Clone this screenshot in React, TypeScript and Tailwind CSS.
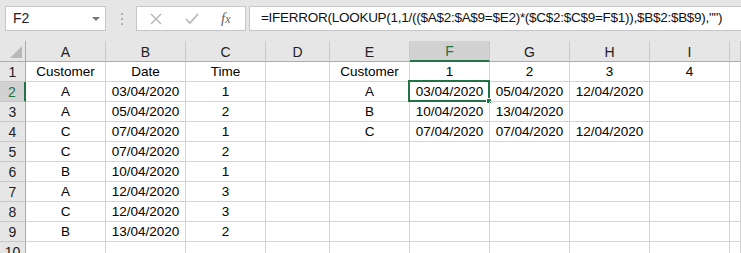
import { Fragment } from 'react'

const COLS = ['A', 'B', 'C', 'D', 'E', 'F', 'G', 'H', 'I', '']

const ROWS: string[][] = [
    ['Customer', 'Date', 'Time', '', 'Customer', '1', '2', '3', '4', ''],
    ['A', '03/04/2020', '1', '', 'A', '03/04/2020', '05/04/2020', '12/04/2020', '', ''],
    ['A', '05/04/2020', '2', '', 'B', '10/04/2020', '13/04/2020', '', '', ''],
    ['C', '07/04/2020', '1', '', 'C', '07/04/2020', '07/04/2020', '12/04/2020', '', ''],
    ['C', '07/04/2020', '2', '', '', '', '', '', '', ''],
    ['B', '10/04/2020', '1', '', '', '', '', '', '', ''],
    ['A', '12/04/2020', '3', '', '', '', '', '', '', ''],
    ['C', '12/04/2020', '3', '', '', '', '', '', '', ''],
    ['B', '13/04/2020', '2', '', '', '', '', '', '', ''],
    ['', '', '', '', '', '', '', '', '', ''],
]

const FORMULA = '=IFERROR(LOOKUP(1,1/(($A$2:$A$9=$E2)*($C$2:$C$9=F$1)),$B$2:$B$9),"")'

function FormulaBar() {
    return (
        <div className="flex h-[41px] items-start bg-[#e6e6e6] pl-[5px] pt-[6px]">
            <div className="flex h-[25px] w-[101px] items-center justify-between border border-[#c6c6c6] bg-white pl-[7px] pr-[5px]">
                <span className="text-[14px] text-[#222]">F2</span>
                <span className="h-0 w-0 border-x-[4px] border-t-[4px] border-x-transparent border-t-[#777]" />
            </div>
            <div className="ml-[15px] flex h-[25px] flex-col items-center justify-center gap-[3px]">
                <span className="h-[2px] w-[2px] bg-[#b0b0b0]" />
                <span className="h-[2px] w-[2px] bg-[#b0b0b0]" />
                <span className="h-[2px] w-[2px] bg-[#b0b0b0]" />
            </div>
            <div className="ml-[13px] flex h-[25px] w-[110px] items-center border border-[#c6c6c6] bg-white">
                <svg width="12" height="12" viewBox="0 0 12 12" className="ml-[13px]">
                    <path d="M1 1 L11 11 M11 1 L1 11" stroke="#b4b4b4" strokeWidth="1.3" fill="none" />
                </svg>
                <svg width="14" height="12" viewBox="0 0 14 12" className="ml-[23px]">
                    <path d="M1 6 L5 10 L13 1" stroke="#b4b4b4" strokeWidth="1.6" fill="none" />
                </svg>
                <span className="ml-[22px] font-['Liberation_Serif',serif] text-[15px] italic leading-none text-[#666]">
                    f<span className="text-[12px]">x</span>
                </span>
            </div>
            <div className="ml-[3px] flex h-[25px] flex-1 items-center border border-[#c6c6c6] border-r-0 bg-white pl-[11px]">
                <span className="whitespace-nowrap text-[13.5px] tracking-[-0.27px] text-[#111]">{FORMULA}</span>
            </div>
        </div>
    )
}

export default function App() {
    return (
        <div className="h-[253px] w-[741px] overflow-hidden bg-white font-['Liberation_Sans',Arial,sans-serif] text-[13.5px] text-black">
            <FormulaBar />
            <div className="grid grid-cols-[26px_80px_80px_80px_64px_80px_80px_80px_80px_80px_1fr] grid-rows-[21px_repeat(10,20px)]">
                <div className="relative border-b border-r border-[#ababab] bg-[#e6e6e6]">
                    <span className="absolute bottom-[3px] right-[3px] h-0 w-0 border-b-[12px] border-l-[12px] border-b-[#b8b8b8] border-l-transparent" />
                </div>
                {COLS.map((c, i) =>
                    c === 'F' ? (
                        <div key={i} className="flex items-center justify-center border-b-2 border-r border-b-[#217346] border-r-[#c8c8c8] bg-[#d2d2d2] pt-[1px] text-[14px] text-[#217346]">
                            {c}
                        </div>
                    ) : (
                        <div key={i} className="flex items-center justify-center border-b border-r border-b-[#ababab] border-r-[#c8c8c8] bg-[#e6e6e6] pt-[2px] text-[14px] text-[#222]">
                            {c}
                        </div>
                    ),
                )}
                {ROWS.map((row, r) => (
                    <Fragment key={r}>
                        {r === 1 ? (
                            <div className="flex items-center justify-center border-b border-r-2 border-b-[#c8c8c8] border-r-[#217346] bg-[#d2d2d2] pt-[1px] text-[14px] text-[#217346]">
                                {r + 1}
                            </div>
                        ) : (
                            <div className="flex items-center justify-center border-b border-r border-b-[#c8c8c8] border-r-[#ababab] bg-[#e6e6e6] pt-[1px] text-[14px] text-[#222]">
                                {r + 1}
                            </div>
                        )}
                        {row.map((v, c) => (
                            <div key={c} className="relative flex items-center justify-center whitespace-nowrap border-b border-r border-[#d4d4d4] pt-[2px]">
                                {v}
                                {r === 1 && c === 5 && (
                                    <span className="absolute -left-[2px] -top-[2px] h-[22px] w-[82px] border-2 border-[#217346]">
                                        <span className="absolute -bottom-[4px] -right-[4px] h-[6px] w-[6px] border border-white bg-[#217346]" />
                                    </span>
                                )}
                            </div>
                        ))}
                    </Fragment>
                ))}
            </div>
        </div>
    )
}
